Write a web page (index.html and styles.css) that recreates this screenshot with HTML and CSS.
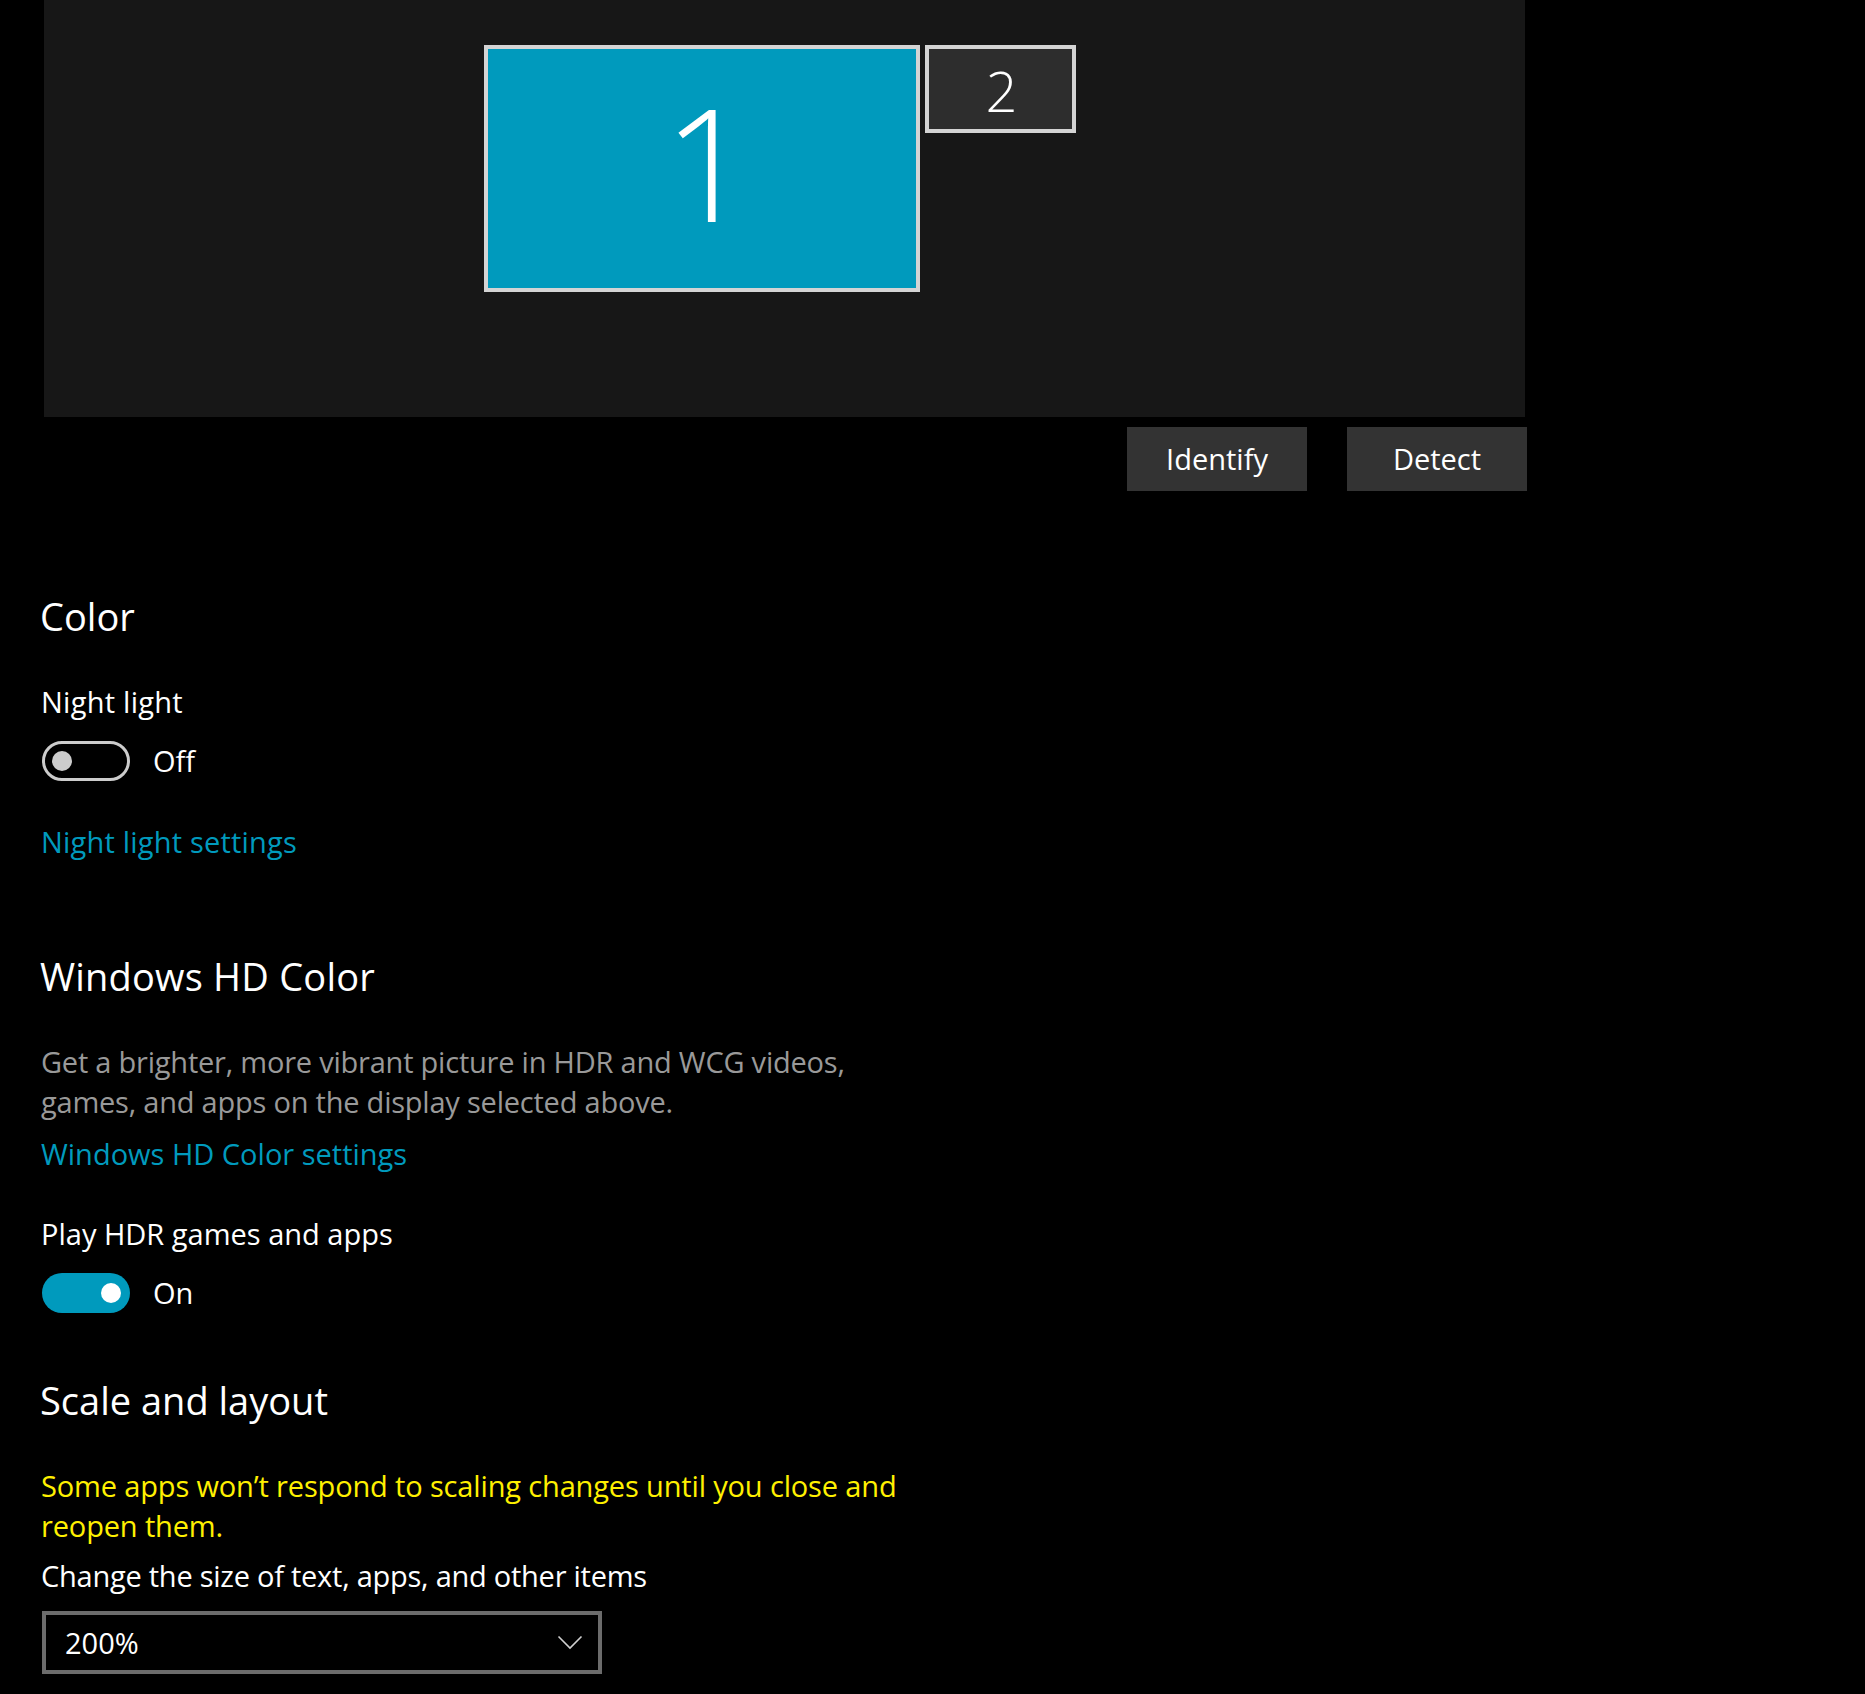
FILE: index.html
```html
<!DOCTYPE html>
<html lang="en">
<head>
<meta charset="utf-8">
<title>Display settings</title>
<link rel="stylesheet" href="styles.css">
</head>
<body>
<main class="page">
  <section class="arrange">
    <div class="canvas">
      <div class="monitor monitor-main"><span class="digit digit-big">1</span></div>
      <div class="monitor monitor-second"><span class="digit digit-small">2</span></div>
    </div>
    <div class="actions">
      <button class="btn">Identify</button>
      <button class="btn">Detect</button>
    </div>
  </section>

  <h2 class="heading h-color">Color</h2>
  <div class="label l-night">Night light</div>
  <div class="toggle-row t-night">
    <span class="toggle off"><span class="knob"></span></span>
    <span class="toggle-text">Off</span>
  </div>
  <a class="link l-nightset">Night light settings</a>

  <h2 class="heading h-hd">Windows HD Color</h2>
  <p class="desc">Get a brighter, more vibrant picture in HDR and WCG videos,<br>games, and apps on the display selected above.</p>
  <a class="link l-hdset">Windows HD Color settings</a>
  <div class="label l-hdr">Play HDR games and apps</div>
  <div class="toggle-row t-hdr">
    <span class="toggle on"><span class="knob"></span></span>
    <span class="toggle-text">On</span>
  </div>

  <h2 class="heading h-scale">Scale and layout</h2>
  <p class="warn">Some apps won’t respond to scaling changes until you close and<br>reopen them.</p>
  <div class="label l-size">Change the size of text, apps, and other items</div>
  <div class="combo">
    <span class="combo-value">200%</span>
    <svg class="chevron" width="26" height="15" viewBox="0 0 26 15"><path d="M1.5 1.5 L13 13 L24.5 1.5" fill="none" stroke="#d0d0d0" stroke-width="1.6"/></svg>
  </div>
</main>
</body>
</html>
```

FILE: styles.css
```css
* { box-sizing: border-box; }
html, body {
  margin: 0;
  padding: 0;
  background: #000000;
}
body {
  width: 1865px;
  height: 1694px;
  overflow: hidden;
  color: #ffffff;
  font-family: "Open Sans", "Noto Sans", "Liberation Sans", sans-serif;
  font-size: 29px;
  line-height: 40px;
}
.page {
  padding-left: 41px;
}
.arrange {
  margin-left: 3px;
  width: 1483px;
}
.canvas {
  position: relative;
  width: 1481px;
  height: 417px;
  background: #171717;
}
.monitor {
  position: absolute;
  top: 45px;
  border: 4px solid #d4d4d4;
  display: flex;
  align-items: center;
  justify-content: center;
  font-weight: 300;
  color: #ffffff;
}
.monitor-main {
  left: 440px;
  width: 436px;
  height: 247px;
  background: #009abd;
  padding-bottom: 15px;
  padding-left: 12px;
}
.monitor-second {
  left: 881px;
  width: 151px;
  height: 88px;
  background: #2d2d2d;
  padding-top: 2px;
  padding-left: 2px;
}
.digit-big {
  font-size: 157px;
  line-height: 157px;
}
.digit-small {
  font-size: 56px;
  line-height: 56px;
}
.actions {
  display: flex;
  justify-content: flex-end;
  gap: 40px;
  margin-top: 10px;
}
.btn {
  width: 180px;
  height: 64px;
  border: none;
  background: #333333;
  color: #ffffff;
  font-family: inherit;
  font-size: 29px;
  line-height: 40px;
  padding: 0;
}
.heading {
  margin: 0 0 0 -1px;
  font-weight: 400;
  font-size: 38px;
  line-height: 52px;
}
.label, .desc, .warn, .link {
  display: block;
  margin: 0;
}
.h-color { margin-top: 99px; }
.l-night {
  margin-top: 40px;
  letter-spacing: 0.25px;
}
.toggle-row {
  display: flex;
  align-items: center;
  height: 40px;
}
.t-night { margin-top: 19px; }
.toggle {
  position: relative;
  width: 88px;
  height: 40px;
  border-radius: 20px;
  margin-left: 1px;
}
.toggle.off {
  border: 3px solid #cccccc;
}
.toggle.on {
  background: #009abd;
}
.knob {
  position: absolute;
  top: 10px;
  width: 20px;
  height: 20px;
  border-radius: 50%;
}
.toggle.off .knob {
  left: 7px;
  top: 7px;
  background: #cccccc;
}
.toggle.on .knob {
  right: 9px;
  background: #ffffff;
}
.toggle-text {
  margin-left: 23px;
}
.link {
  color: #009abd;
  text-decoration: none;
}
.l-nightset {
  margin-top: 41px;
  letter-spacing: 0.2px;
}
.h-hd {
  margin-top: 88px;
  letter-spacing: 0.2px;
}
.desc {
  margin-top: 40px;
  color: #999999;
  letter-spacing: -0.22px;
}
.l-hdset { margin-top: 12px; }
.l-hdr { margin-top: 40px; }
.t-hdr { margin-top: 19px; }
.h-scale { margin-top: 61px; }
.warn {
  margin-top: 40px;
  color: #fff000;
  letter-spacing: -0.15px;
}
.l-size {
  margin-top: 10px;
  letter-spacing: -0.25px;
}
.combo {
  margin-top: 15px;
  margin-left: 1px;
  width: 560px;
  height: 63px;
  border: 4px solid #6c6c6c;
  display: flex;
  align-items: center;
  justify-content: space-between;
  padding: 0 15px 0 19px;
}
.chevron {
  display: block;
}
```
